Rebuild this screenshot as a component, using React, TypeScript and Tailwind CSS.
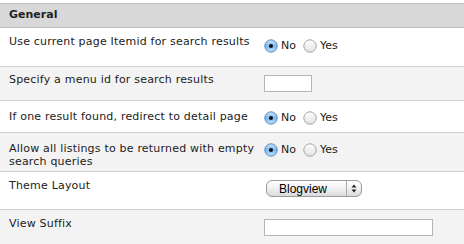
// Search settings panel, "General" group
type RadioProps = { checked: boolean };

function Radio({ checked }: RadioProps) {
  return (
    <svg width="14" height="14" viewBox="0 0 14 14" className="shrink-0">
      <defs>
        <linearGradient id={checked ? 'rOn' : 'rOff'} x1="0" y1="0" x2="0" y2="1">
          {checked ? (
            <>
              <stop offset="0" stopColor="#c9e3fb" />
              <stop offset="0.5" stopColor="#79b8f0" />
              <stop offset="1" stopColor="#bfe0fb" />
            </>
          ) : (
            <>
              <stop offset="0" stopColor="#ffffff" />
              <stop offset="0.5" stopColor="#f0f0f0" />
              <stop offset="1" stopColor="#e4e4e4" />
            </>
          )}
        </linearGradient>
      </defs>
      <circle
        cx="7"
        cy="7"
        r="6.2"
        fill={`url(#${checked ? 'rOn' : 'rOff'})`}
        stroke={checked ? '#4f7fb8' : '#9a9a9a'}
        strokeWidth="0.9"
      />
      {checked && <circle cx="7" cy="7" r="2" fill="#111" />}
    </svg>
  );
}

function NoYes() {
  return (
    <div className="flex items-center text-[11px] text-[#222]">
      <Radio checked />
      <span className="ml-[3px]">No</span>
      <span className="ml-[7px]">
        <Radio checked={false} />
      </span>
      <span className="ml-[3px]">Yes</span>
    </div>
  );
}

type RowProps = {
  label: React.ReactNode;
  gray?: boolean;
  h: string;
  lpt: string;
  cpt: string;
  children: React.ReactNode;
};

function Row({ label, gray, h, lpt, cpt, children }: RowProps) {
  return (
    <div className={`flex border-b border-[#cfcfcf] ${h} ${gray ? 'bg-[#f3f3f3]' : 'bg-white'}`}>
      <div className={`w-[264px] shrink-0 pl-[9px] pr-1 leading-[13px] tracking-[0.2px] ${lpt}`}>{label}</div>
      <div className={cpt}>{children}</div>
    </div>
  );
}

export default function App() {
  return (
    <div
      className="w-[464px] h-[244px] overflow-hidden bg-white pt-[3px] text-[11px] text-[#222]"
      style={{ fontFamily: '"DejaVu Sans", Verdana, sans-serif' }}
    >
      <div className="h-[25px] border-y border-[#bdbdbd] bg-[#d8d8d8] pl-[9px] flex items-center font-bold text-[#222]">
        General
      </div>
      <Row label="Use current page Itemid for search results" h="h-[39px]" lpt="pt-[7px]" cpt="pt-[10px]">
        <NoYes />
      </Row>
      <Row label="Specify a menu id for search results" gray h="h-[34px]" lpt="pt-[6px]" cpt="pt-[8px]">
        <div className="w-[48px] h-[17px] border border-[#b5b5b5] bg-white" />
      </Row>
      <Row label="If one result found, redirect to detail page" h="h-[32px]" lpt="pt-[9px]" cpt="pt-[9px]">
        <NoYes />
      </Row>
      <Row
        label={
          <>
            Allow all listings to be returned with empty
            <br />
            search queries
          </>
        }
        gray
        h="h-[39px]"
        lpt="pt-[9px]"
        cpt="pt-[9px]"
      >
        <NoYes />
      </Row>
      <Row label="Theme Layout" h="h-[38px]" lpt="pt-[7px]" cpt="pt-[8px] pl-[2px]">
        <div className="flex items-center w-[96px] h-[17px] rounded-[6px] border border-[#9a9a9a] bg-gradient-to-b from-white via-[#f1f1f1] to-[#dadada] text-[11px] text-black">
          <span className="flex-1 pl-[12px]" style={{ fontFamily: '"Liberation Sans", Arial, sans-serif', fontSize: '12px' }}>
            Blogview
          </span>
          <span className="h-full w-px bg-[#a8a8a8]" />
          <svg width="14" height="15" viewBox="0 0 14 15">
            <path d="M4.5 6.5 L7 3.5 L9.5 6.5 Z" fill="#222" />
            <path d="M4.5 8.5 L7 11.5 L9.5 8.5 Z" fill="#222" />
          </svg>
        </div>
      </Row>
      <Row label="View Suffix" gray h="h-[40px]" lpt="pt-[7px]" cpt="pt-[9px]">
        <div className="w-[169px] h-[17px] border border-[#b5b5b5] bg-white" />
      </Row>
    </div>
  );
}
